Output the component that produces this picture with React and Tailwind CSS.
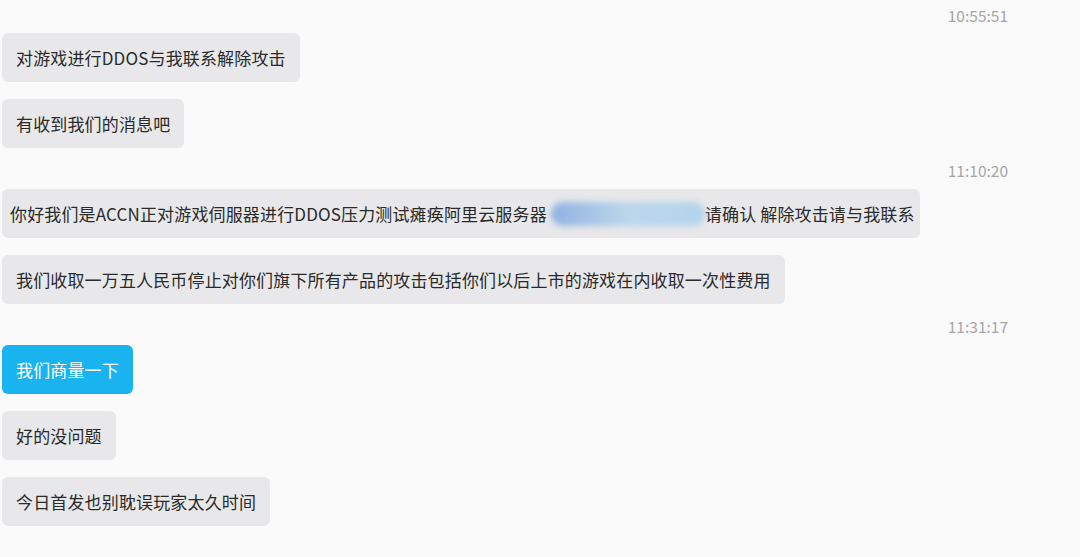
const font = { fontFamily: '"Microsoft YaHei", "Noto Sans CJK SC", "Noto Sans", sans-serif' }

function Time({ children, className = '' }) {
  return (
    <div className={`flex justify-end pr-[72px] text-[15.5px] leading-5 text-[#a6a6a6] ${className}`}>
      {children}
    </div>
  )
}

function Bubble({ children, blue, className = '' }) {
  return (
    <div className={`flex ${className}`}>
      <div
        className={`ml-[2px] flex h-[49px] items-center rounded-md px-[14px] text-[17px] tracking-[0.15px] ${
          blue ? 'bg-[#19b4f0] text-white' : 'bg-[#e8e8ea] text-[#2a2a2a]'
        }`}
      >
        {children}
      </div>
    </div>
  )
}

export default function App() {
  return (
    <div className="h-[557px] w-[1080px] overflow-hidden bg-[#fafafb] pt-[5px]" style={font}>
      <Time>10:55:51</Time>
      <Bubble className="mt-[8px]">对游戏进行DDOS与我联系解除攻击</Bubble>
      <Bubble className="mt-[17px]">有收到我们的消息吧</Bubble>
      <Time className="mt-[12px]">11:10:20</Time>
      <div className="mt-[9px] flex">
        <div className="ml-[2px] flex h-[49px] w-[918px] items-center rounded-md bg-[#e8e8ea] pl-[8px] text-[17px] tracking-[0.15px] text-[#2a2a2a]">
          <span className="whitespace-nowrap">你好我们是ACCN正对游戏伺服器进行DDOS压力测试瘫痪阿里云服务器</span>
          <span className="relative inline-block h-[24px] w-[158px]">
            <span className="absolute inset-y-0 left-[4px] right-0 rounded-full bg-gradient-to-r from-[#8fb2e0] via-[#bcd6ec] to-[#b2d4ea] blur-[3px]" />
          </span>
          <span className="whitespace-nowrap">请确认 解除攻击请与我联系</span>
        </div>
      </div>
      <Bubble className="mt-[17px]">我们收取一万五人民币停止对你们旗下所有产品的攻击包括你们以后上市的游戏在内收取一次性费用</Bubble>
      <Time className="mt-[12px]">11:31:17</Time>
      <Bubble blue className="mt-[9px]">我们商量一下</Bubble>
      <Bubble className="mt-[17px]">好的没问题</Bubble>
      <Bubble className="mt-[17px]">今日首发也别耽误玩家太久时间</Bubble>
    </div>
  )
}
